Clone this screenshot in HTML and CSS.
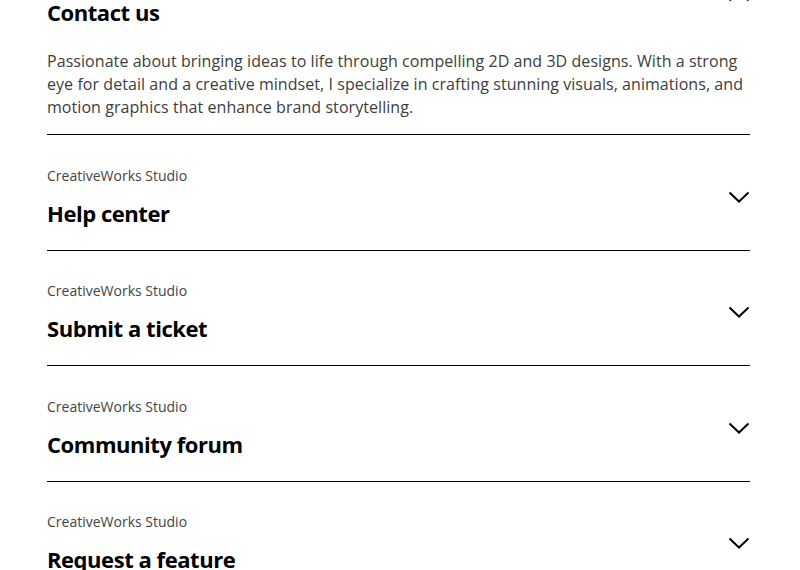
FILE: index.html
```html
<!DOCTYPE html>
<html lang="en">
<head>
<meta charset="utf-8">
<title>Contact us</title>
<link rel="stylesheet" href="styles.css">
</head>
<body>
<main class="faq">
  <section class="item open">
    <div class="head">
      <div class="titles">
        <p class="sub">CreativeWorks Studio</p>
        <h2 class="title">Contact us</h2>
      </div>
      <svg class="chev" viewBox="0 0 22 12" width="22" height="12"><path d="M1.5 1.5 L11 10.5 L20.5 1.5" fill="none" stroke="#000" stroke-width="2"/></svg>
    </div>
    <p class="body">Passionate about bringing ideas to life through compelling 2D and 3D designs. With a strong eye for detail and a creative mindset, I specialize in crafting stunning visuals, animations, and motion graphics that enhance brand storytelling.</p>
  </section>
  <section class="item">
    <div class="head">
      <div class="titles">
        <p class="sub">CreativeWorks Studio</p>
        <h2 class="title">Help center</h2>
      </div>
      <svg class="chev" viewBox="0 0 22 12" width="22" height="12"><path d="M1.5 1.5 L11 10.5 L20.5 1.5" fill="none" stroke="#000" stroke-width="2"/></svg>
    </div>
  </section>
  <section class="item">
    <div class="head">
      <div class="titles">
        <p class="sub">CreativeWorks Studio</p>
        <h2 class="title">Submit a ticket</h2>
      </div>
      <svg class="chev" viewBox="0 0 22 12" width="22" height="12"><path d="M1.5 1.5 L11 10.5 L20.5 1.5" fill="none" stroke="#000" stroke-width="2"/></svg>
    </div>
  </section>
  <section class="item">
    <div class="head">
      <div class="titles">
        <p class="sub">CreativeWorks Studio</p>
        <h2 class="title">Community forum</h2>
      </div>
      <svg class="chev" viewBox="0 0 22 12" width="22" height="12"><path d="M1.5 1.5 L11 10.5 L20.5 1.5" fill="none" stroke="#000" stroke-width="2"/></svg>
    </div>
  </section>
  <section class="item">
    <div class="head">
      <div class="titles">
        <p class="sub">CreativeWorks Studio</p>
        <h2 class="title">Request a feature</h2>
      </div>
      <svg class="chev" viewBox="0 0 22 12" width="22" height="12"><path d="M1.5 1.5 L11 10.5 L20.5 1.5" fill="none" stroke="#000" stroke-width="2"/></svg>
    </div>
  </section>
</main>
</body>
</html>
```
FILE: styles.css
```css
html, body {
  margin: 0;
  padding: 0;
  background: #fff;
}
body {
  font-family: "Open Sans", "Noto Sans", sans-serif;
  color: #000;
  overflow: hidden;
}
.faq {
  margin: -67px 50px 0 47px;
}
.item {
  border-bottom: 1px solid #000;
  padding: 30.5px 0 22px;
}
.item.open {
  padding-top: 32px;
}
.head {
  display: flex;
  align-items: center;
  justify-content: space-between;
}
.titles {
  display: flex;
  flex-direction: column;
  gap: 12px;
}
.sub {
  margin: 0;
  font-size: 14px;
  line-height: 20px;
  color: #444;
}
.title {
  margin: 0;
  font-size: 22px;
  line-height: 30px;
  font-weight: 700;
  letter-spacing: -0.45px;
  color: #000;
}
.chev {
  display: block;
  margin-right: 0;
}
.open .chev {
  transform: rotate(180deg);
}
.body {
  margin: 23px 0 -7px;
  font-size: 16px;
  line-height: 23px;
  letter-spacing: 0.06px;
  color: #3d3d3d;
}
```
